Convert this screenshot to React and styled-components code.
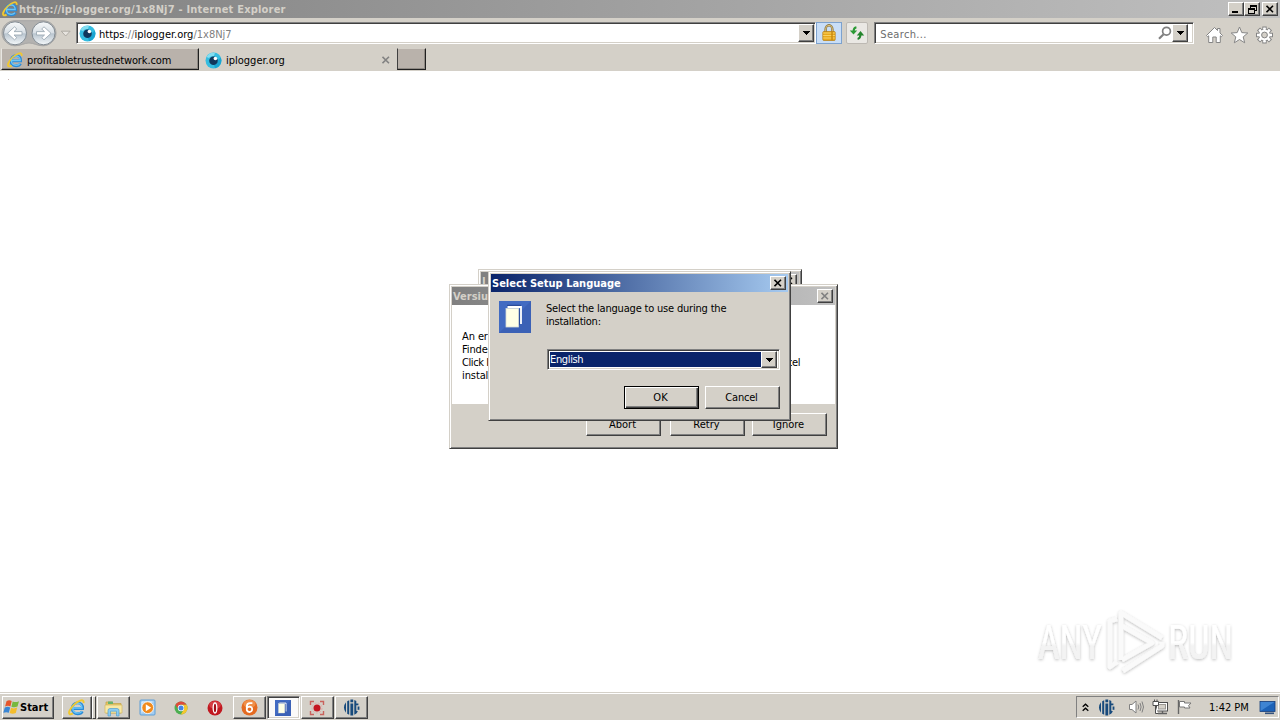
import React, { memo } from 'react';
import styled, { createGlobalStyle, css } from 'styled-components';

const GlobalStyle = createGlobalStyle`
  * { box-sizing: border-box; }
  html, body, #root { height: 100%; }
  body {
    margin: 0;
    overflow: hidden;
    background: #fff;
    color: #000;
    font-family: 'DejaVu Sans Condensed', 'DejaVu Sans', sans-serif;
    font-stretch: condensed;
    font-size: 11px;
    line-height: 13px;
  }
  svg { display: block; flex: none; }
`;

const raised = css`
  border: 1px solid;
  border-color: #fff #404040 #404040 #fff;
  box-shadow: inset -1px -1px 0 #808080;
`;

const sunken = css`
  border: 1px solid;
  border-color: #808080 #fff #fff #808080;
  box-shadow: inset 1px 1px 0 #404040, inset -1px -1px 0 #d4d0c8;
`;

const Desktop = styled.div`
  width: 1280px;
  height: 720px;
  display: flex;
  flex-direction: column;
  background: #fff;
`;

const Text = styled.span`
  white-space: nowrap;
  letter-spacing: ${({ ls }) => ls || 0}px;
  color: ${({ color }) => color || 'inherit'};
  font-weight: ${({ bold }) => (bold ? 700 : 400)};
`;

const BrowserTitle = styled.div`
  height: 18px;
  flex: none;
  display: flex;
  align-items: center;
  padding: 0 2px 0 2px;
  background: linear-gradient(90deg, #808080, #c0c0c0);
`;

const TitleLabel = styled(Text)`
  flex: 1;
  margin-left: ${({ gap }) => gap || 0}px;
`;

const CaptionButton = styled.div`
  width: 16px;
  height: 14px;
  flex: none;
  display: flex;
  align-items: center;
  justify-content: center;
  margin-left: ${({ gap }) => gap || 0}px;
  background: #d4d0c8;
  ${raised}
`;

const NavBar = styled.div`
  height: 30px;
  flex: none;
  display: flex;
  align-items: flex-start;
  padding: 4px 6px 0 0;
  background: #d4d0c8;
`;

const NavArrows = styled.div`
  width: 76px;
  height: 26px;
  margin-top: -2px;
`;

const Field = styled.div`
  width: ${({ w }) => w}px;
  height: 22px;
  display: flex;
  align-items: center;
  padding: 2px 1px 2px 2px;
  background: #fff;
  ${sunken}
`;

const FieldText = styled.div`
  flex: 1;
  padding-left: ${({ pl }) => pl || 0}px;
  padding-top: 2px;
`;

const DropButton = styled.div`
  width: 16px;
  height: ${({ h }) => h || 18}px;
  flex: none;
  display: flex;
  align-items: center;
  justify-content: center;
  margin-right: ${({ mr }) => mr || 0}px;
  background: #d4d0c8;
  ${raised}
`;

const ToolButton = styled.div`
  width: ${({ w }) => w}px;
  height: 22px;
  display: flex;
  align-items: center;
  justify-content: center;
  margin: 0 ${({ mr }) => mr}px 0 ${({ ml }) => ml}px;
  border: 1px solid ${({ active }) => (active ? '#7da2ce' : '#bdb9b3')};
  border-radius: ${({ active }) => (active ? 0 : 2)}px;
  background: ${({ active }) => (active ? '#c9def7' : '#eae8e4')};
`;

const NavIcons = styled.div`
  display: flex;
  gap: 6px;
  margin: 4px 0 0 11px;
`;

const TabBar = styled.div`
  height: 23px;
  flex: none;
  display: flex;
  padding-left: 1px;
  background: #d4d0c8;
`;

const Tab = styled.div`
  width: ${({ w }) => w}px;
  height: 22px;
  display: flex;
  align-items: center;
  gap: 4px;
  padding: 2px 7px 0 ${({ active }) => (active ? 6 : 5)}px;
  ${({ active }) =>
    !active &&
    css`
      background: #b9b2ab;
      border: 1px solid;
      border-color: #d4d0c8 #202020 #202020 #e8e6e2;
      box-shadow: inset -1px -1px 0 #8f8a84;
    `}
`;

const NewTab = styled(Tab)`
  border-left-color: #404040;
`;

const Page = styled.div`
  flex: 1;
  padding: 8px;
`;

const Speck = styled.div`
  width: 1px;
  height: 1px;
  background: #c9b6b6;
`;

const Win = styled.div`
  position: absolute;
  left: ${({ x }) => x}px;
  top: ${({ y }) => y}px;
  width: ${({ w }) => w}px;
  height: ${({ h }) => h}px;
  display: flex;
  flex-direction: column;
  padding: 2px;
  background: #d4d0c8;
  border: 1px solid;
  border-color: #d4d0c8 #404040 #404040 #d4d0c8;
  box-shadow: inset 1px 1px 0 #fff, inset -1px -1px 0 #808080;
`;

const WinTitle = styled.div`
  height: 18px;
  flex: none;
  display: flex;
  align-items: center;
  padding: 0 2px 0 1px;
  color: ${({ active }) => (active ? '#fff' : '#d4d0c8')};
  background: ${({ active }) =>
    active ? 'linear-gradient(90deg, #0a246a, #a6caf0)' : 'linear-gradient(90deg, #808080, #c0c0c0)'};
`;

const ErrorBody = styled.div`
  height: 99px;
  flex: none;
  display: flex;
  flex-direction: column;
  padding: 25px 10px 0 10px;
  background: #fff;
`;

const ErrorLine = styled.div`
  display: flex;
  justify-content: space-between;
  height: 13px;
  padding-right: 25px;
  letter-spacing: ${({ ls }) => ls || -0.1}px;
`;

const ErrorActions = styled.div`
  display: flex;
  justify-content: flex-end;
  padding: 9px 8px 0 0;
`;

const Button = styled.div`
  width: 75px;
  height: 23px;
  display: flex;
  align-items: center;
  justify-content: center;
  margin-left: ${({ gap }) => gap || 0}px;
  padding-right: 2px;
  background: #d4d0c8;
  ${raised}
  ${({ primary }) =>
    primary &&
    css`
      border-color: #000;
      box-shadow: inset 1px 1px 0 #fff, inset -1px -1px 0 #404040, inset -2px -2px 0 #808080;
    `}
`;

const SetupBody = styled.div`
  display: flex;
  padding: 9px 9px 0 8px;
`;

const SetupMain = styled.div`
  flex: 1;
  display: flex;
  flex-direction: column;
  padding-left: 15px;
`;

const SetupText = styled.div`
  display: flex;
  flex-direction: column;
  height: 48px;
  padding-top: 1px;
`;

const Select = styled.div`
  height: 21px;
  display: flex;
  align-items: center;
  margin: 0 -1px 0 1px;
  padding: 1px 2px 1px 1px;
  background: #fff;
  ${sunken}
`;

const SelectValue = styled.div`
  flex: 1;
  height: 15px;
  margin-left: 1px;
  padding-top: 1px;
  color: #fff;
  background: #0a246a;
`;

const SetupActions = styled.div`
  display: flex;
  justify-content: flex-end;
  margin: 16px -1px 0 0;
`;

const Watermark = styled.div`
  position: absolute;
  left: 1030px;
  top: 604px;
`;

const Taskbar = styled.div`
  height: 28px;
  flex: none;
  display: flex;
  align-items: flex-start;
  padding: 3px 1px 0 2px;
  background: #d4d0c8;
  border-top: 1px solid #d4d0c8;
  box-shadow: inset 0 1px 0 #fff;
`;

const StartButton = styled.div`
  width: 52px;
  height: 23px;
  display: flex;
  align-items: center;
  margin-right: 8px;
  ${raised}
`;

const TaskItem = styled.div`
  width: ${({ w }) => w || 33}px;
  height: 23px;
  display: flex;
  align-items: center;
  justify-content: center;
  padding-right: 1px;
  margin-right: ${({ mr }) => mr ?? 1}px;
  ${({ open }) => open && raised}
  ${({ pressed }) =>
    pressed &&
    css`
      ${sunken}
      background: #fbfaf9;
    `}
`;

const StackEdge = styled.div`
  width: 4px;
  height: 23px;
  margin-right: ${({ mr }) => mr || 0}px;
  border: 1px solid;
  border-color: #fff #404040 #404040 #fff;
`;

const Tray = styled.div`
  width: 203px;
  height: 22px;
  display: flex;
  align-items: center;
  margin-left: auto;
  padding-left: 5px;
  border: 1px solid;
  border-color: #808080 #fff #fff #808080;
`;

const TrayIcons = styled.div`
  display: flex;
  align-items: center;
  gap: 7px;
  margin-left: ${({ ml }) => ml}px;
`;

const Clock = styled(Text)`
  margin: 0 10px 0 16px;
`;

const IeIcon = ({ size = 16 }) => (
  <svg width={size} height={size} viewBox="0 0 16 16" fill="none">
    <path d="M4 8.9H13.7C14 5.3 11.9 3.6 9.2 3.6C6.2 3.6 4 5.8 4 8.9C4 11.9 6.1 13.9 9.2 13.9C11.3 13.9 12.8 13 13.5 11.6" stroke="#2a8ad6" strokeWidth="2.7" />
    <path d="M4.3 8.5H13.2C13.2 5.4 11.4 4 9.2 4C6.4 4 4.5 6 4.5 8.8C4.5 11.5 6.4 13.3 9.2 13.3C11 13.3 12.3 12.6 13 11.6" stroke="#6cc6f7" strokeWidth="1.3" />
    <path d="M14.6 3.9C15.1 1.7 13.9.7 11.6 1.5C7.6 2.8 3.2 7.1 1.4 11.2C.3 13.9 1.5 15.3 4.6 13.6" stroke="#f0c830" strokeWidth="1.8" />
  </svg>
);

const LoggerIcon = () => (
  <svg width="17" height="17" viewBox="0 0 17 17">
    <circle cx="8.5" cy="8.5" r="8" fill="#35bde0" />
    <path d="M1.5 5A8 8 0 0 1 10 .8L9 4A5 5 0 0 0 4 6Z" fill="#83ddf0" />
    <path d="M15.8 5.5A8 8 0 0 1 10 16.3L9 13A5 5 0 0 0 13 8Z" fill="#1aa5d2" />
    <circle cx="8.5" cy="8.7" r="4.3" fill="#10375c" />
    <circle cx="10.4" cy="6.5" r="1.8" fill="#fff" />
  </svg>
);

const NavArrowsIcon = () => (
  <svg width="76" height="27" viewBox="0 0 76 27">
    <defs>
      <linearGradient id="glass" x1="0" y1="0" x2="0" y2="1">
        <stop offset="0" stopColor="#f7f9fa" />
        <stop offset=".48" stopColor="#d8dfe5" />
        <stop offset=".52" stopColor="#b9c5cf" />
        <stop offset="1" stopColor="#f4f8fa" />
      </linearGradient>
    </defs>
    <path d="M15 .7H43C50 .7 56 6 56 13S50 25.8 43 25.8C37 25.8 34 23 29 23S21 25.8 15 25.8C8 25.8 2 20 2 13S8 .7 15 .7Z" fill="#b3b2b0" stroke="#a6a6a5" />
    {[15, 43.5].map((cx) => (
      <circle key={cx} cx={cx} cy="13.3" r="11.5" fill="url(#glass)" stroke="#828b93" />
    ))}
    <path d="M7.5 13.3L14.5 6.8L16.8 9L14 11.6H22V15H14L16.8 17.7L14.5 19.8Z" fill="#fff" stroke="#9eabb6" strokeWidth=".9" />
    <path d="M51 13.3L44 6.8L41.7 9L44.5 11.6H36.5V15H44.5L41.7 17.7L44 19.8Z" fill="#fff" stroke="#9eabb6" strokeWidth=".9" />
    <path d="M61.3 11.2H70.1L65.7 16Z" fill="#e7e4df" stroke="#aaa69f" strokeWidth=".9" />
  </svg>
);

const DownArrow = () => (
  <svg width="7" height="4" viewBox="0 0 7 4" shapeRendering="crispEdges">
    <path d="M0 0H7L3.5 4Z" fill="#000" />
  </svg>
);

const CloseGlyph = ({ color = '#000' }) => (
  <svg width="8" height="8" viewBox="0 0 8 8">
    <path d="M.5 .8L7 7.2M7 .8L.5 7.2" stroke={color} strokeWidth="1.6" />
  </svg>
);

const LockIcon = () => (
  <svg width="16" height="18" viewBox="0 0 16 18">
    <path d="M4.6 9V5.2A3.4 3.9 0 0 1 11.4 5.2V9" fill="none" stroke="#8a7440" strokeWidth="2.4" />
    <path d="M4.6 9V5.2A3.4 3.9 0 0 1 11.4 5.2V9" fill="none" stroke="#d9c07a" strokeWidth="1" />
    <rect x="1.8" y="7.5" width="12.4" height="9" rx="1" fill="#e8a81c" stroke="#b47b12" strokeWidth=".7" />
    <path d="M2.2 9H13.8M2.2 11.5H13.8M2.2 14H13.8" stroke="#f9d264" />
    <path d="M11 8V16.3" stroke="#c88b12" strokeWidth="1.5" />
  </svg>
);

const RefreshIcon = () => (
  <svg width="16" height="16" viewBox="0 0 16 16" fill="none">
    <path d="M7.4 2.2C5.4 2.6 4.6 4 4.6 6.2" stroke="#2b9a34" strokeWidth="2" />
    <path d="M.8 5.4H8.2L4.5 9.6Z" fill="#2b9a34" />
    <path d="M8.6 13.9C10.6 13.5 11.4 12 11.4 9.8" stroke="#23842c" strokeWidth="2" />
    <path d="M7.8 10.4H15.2L11.5 6Z" fill="#23842c" />
  </svg>
);

const SearchIcon = () => (
  <svg width="14" height="14" viewBox="0 0 14 14" fill="none" stroke="#808080">
    <circle cx="8.5" cy="5.2" r="3.9" strokeWidth="1.7" />
    <path d="M5.6 8.3L1 12.8" strokeWidth="2.2" />
  </svg>
);

const HomeIcon = () => (
  <svg width="19" height="18" viewBox="0 0 19 18">
    <path d="M9.5 1.5L12.5 4.5V2.5H15V7L17.5 9.5L16.4 10.7L15.3 9.8V16.5H11.2V11H7.8V16.5H3.7V9.8L2.6 10.7L1.5 9.5Z" fill="#fff" stroke="#858585" />
  </svg>
);

const StarIcon = () => (
  <svg width="19" height="18" viewBox="0 0 19 18">
    <path d="M9.5 1L11.8 6.6L17.8 7L13.2 10.9L14.7 16.8L9.5 13.5L4.3 16.8L5.8 10.9L1.2 7L7.2 6.6Z" fill="#fff" stroke="#858585" />
  </svg>
);

const GearIcon = () => (
  <svg width="19" height="18" viewBox="0 0 19 18">
    <g transform="translate(9.5 9)">
      {[0, 45, 90, 135, 180, 225, 270, 315].map((a) => (
        <rect key={a} x="-1.7" y="-8" width="3.4" height="4" fill="#fff" stroke="#858585" transform={`rotate(${a})`} />
      ))}
      <circle r="5.8" fill="#fff" stroke="#858585" />
      {[0, 45, 90, 135, 180, 225, 270, 315].map((a) => (
        <rect key={a} x="-1.2" y="-7" width="2.4" height="3" fill="#fff" transform={`rotate(${a})`} />
      ))}
      <circle r="2.9" fill="#d4d0c8" stroke="#858585" />
    </g>
  </svg>
);

const SetupIcon = ({ size }) => (
  <svg width={size} height={size} viewBox="0 0 32 32">
    <rect width="32" height="32" fill="#426bc2" />
    <path d="M0 32L32 0V32Z" fill="#3b61b6" />
    <path d="M8 4.5H22" fill="none" stroke="#2b4b98" strokeWidth="1.5" />
    <path d="M8.5 6H22V23" fill="none" stroke="#fff" strokeWidth="1.8" />
    <path d="M20.3 8V24" stroke="#2b4b98" />
    <rect x="7" y="7.5" width="12.5" height="18.5" fill="#ffffe6" stroke="#d7dcd8" strokeWidth=".8" />
  </svg>
);

const StartLogo = () => (
  <svg width="17" height="17" viewBox="0 0 17 17">
    <path d="M3.5 2.2C5.5 1 7 1.1 8.7 2.1L7.4 7.4C5.8 6.5 4.2 6.4 2.1 7.4Z" fill="#e6562b" />
    <path d="M9.7 2.4C11.6 3.3 13.4 3.3 16 2.2L14.5 7.6C12.3 8.6 10.5 8.6 8.4 7.7Z" fill="#78b83e" />
    <path d="M1.8 8.4C4 7.5 5.5 7.5 7.2 8.4L5.8 13.8C4.2 12.9 2.5 12.9 .3 13.8Z" fill="#3a86d4" />
    <path d="M8.1 8.8C10.2 9.7 12 9.6 14.2 8.6L12.8 14C10.6 15 8.8 15 6.7 14.1Z" fill="#f4bd2b" />
  </svg>
);

const FolderIcon = () => (
  <svg width="19" height="18" viewBox="0 0 19 18">
    <path d="M2 3H8L9 4.5H17V14H2Z" fill="#e6c564" stroke="#c3a044" strokeWidth=".7" />
    <path d="M4 2.5H9V5H4Z" fill="#69b36c" />
    <path d="M1 6H18V14H1Z" fill="#f8e8a4" stroke="#d3b761" strokeWidth=".7" />
    <path d="M4 17V11.5Q4 9.5 6 9.5H13Q15 9.5 15 11.5V17H12.5V12.2H6.5V17Z" fill="#8ccdf2" stroke="#519fcf" strokeWidth=".7" />
  </svg>
);

const MediaIcon = () => (
  <svg width="17" height="17" viewBox="0 0 17 17">
    <rect x="1" y="1" width="15" height="15" rx="1" fill="#a5cdf0" stroke="#5f9fd7" />
    <path d="M3 13.5V3H13.5" fill="none" stroke="#e5f3fd" />
    <circle cx="8.7" cy="8.7" r="5.9" fill="#f18a1c" stroke="#fff" strokeWidth=".8" />
    <path d="M6.8 5.2L12.2 8.7L6.8 12.2Z" fill="#fff" />
  </svg>
);

const ChromeIcon = () => (
  <svg width="14" height="14" viewBox="0 0 14 14">
    <circle cx="7" cy="7" r="6.5" fill="#4cae50" />
    <path d="M1.4 3.7A6.5 6.5 0 0 1 12.6 3.8H7A3 3 0 0 0 4.2 8.3Z" fill="#df4a3b" />
    <path d="M12.6 3.8A6.5 6.5 0 0 1 6.8 13.5L9.7 8.5A3 3 0 0 0 7 3.8Z" fill="#f6c62d" />
    <circle cx="7" cy="7" r="3.2" fill="#fff" />
    <circle cx="7" cy="7" r="2.5" fill="#4285e4" />
  </svg>
);

const OperaIcon = () => (
  <svg width="16" height="16" viewBox="0 0 16 16">
    <circle cx="8" cy="8" r="7.5" fill="#c11820" />
    <ellipse cx="8" cy="5" rx="5.8" ry="3.8" fill="#e4575a" opacity=".6" />
    <ellipse cx="8" cy="8" rx="1.8" ry="5" fill="#a20e16" stroke="#fff" strokeWidth="1.3" />
  </svg>
);

const OrangeIcon = () => (
  <svg width="17" height="17" viewBox="0 0 17 17" fill="none">
    <circle cx="8.5" cy="8.5" r="8" fill="#e46a20" />
    <ellipse cx="8.5" cy="5" rx="6" ry="4" fill="#f5a05a" opacity=".7" />
    <path d="M11.4 4.2H9Q5.8 4.2 5.8 7.6V9.8A2.7 2.7 0 1 0 8.5 7.6Q6.8 7.6 6 9" stroke="#fff" strokeWidth="1.8" />
  </svg>
);

const RecordIcon = () => (
  <svg width="16" height="16" viewBox="0 0 16 16" fill="none">
    <path d="M1.5 5V1.5H5M11 1.5H14.5V5M14.5 11V14.5H11M5 14.5H1.5V11" stroke="#c9625c" strokeWidth="1.4" />
    <circle cx="8" cy="8" r="5" stroke="#e3aaa6" strokeDasharray="2 1.4" />
    <circle cx="8" cy="8" r="3.5" fill="#c41520" />
  </svg>
);

const BitIcon = () => (
  <svg width="17" height="17" viewBox="0 0 17 17">
    <path d="M3 3.2V13.8A8 8 0 0 1 3 3.2Z" fill="#174a7c" />
    <path d="M4.2 2.2L6.2 1.2V15.8L4.2 14.8Z" fill="#174a7c" />
    <path d="M7.4 .6H10.2V3.2H7.4ZM7.4 4.6H10.2V16.4H7.4Z" fill="#174a7c" />
    <path d="M11.3 .9L13.3 2V4.6H15.4V6.2H13.3V11.2Q13.3 12.4 15 12.2L13.4 14.6L11.3 15.8Z" fill="#174a7c" />
    <path d="M14.6 7.5H16.4V10.8H14.6Z" fill="#174a7c" />
  </svg>
);

const ChevronsIcon = () => (
  <svg width="7" height="9" viewBox="0 0 7 9" fill="none" stroke="#000" strokeWidth="1.3">
    <path d="M.7 3.8L3.5 1.2L6.3 3.8M.7 7.8L3.5 5.2L6.3 7.8" />
  </svg>
);

const SpeakerIcon = () => (
  <svg width="17" height="16" viewBox="0 0 17 16" fill="none" stroke="#808080">
    <path d="M1.5 5.5H4L8 2V14L4 10.5H1.5Z" fill="#fff" />
    <path d="M10 5.5Q11.5 8 10 10.5M12 4Q14.2 8 12 12M14 2.5Q17 8 14 13.5" />
  </svg>
);

const NetworkIcon = () => (
  <svg width="17" height="16" viewBox="0 0 17 16">
    <rect x="4.5" y="3.5" width="11" height="8.5" fill="#fff" stroke="#4e4e4e" />
    <rect x="6.5" y="5.5" width="7" height="4.5" fill="#d4d0c8" stroke="#9a9792" />
    <path d="M6 14.5H15M10.5 12V14.5" stroke="#606060" strokeWidth="1.4" />
    <path d="M1 2.5H6.5V6.5H1ZM2.5 .5V2.5M5 .5V2.5M3.5 6.5V14.5H6" fill="#fff" stroke="#4e4e4e" />
  </svg>
);

const FlagIcon = () => (
  <svg width="17" height="16" viewBox="0 0 17 16">
    <path d="M2.5 1V15" stroke="#666" strokeWidth="1.4" />
    <path d="M3.5 2.5H8.5V4H15L12.5 6.7L14 9H8.5V8H3.5Z" fill="#fff" stroke="#777" />
  </svg>
);

const MonitorIcon = () => (
  <svg width="17" height="15" viewBox="0 0 17 15">
    <rect x="1" y="1.5" width="15" height="10" fill="#1d62b7" stroke="#173e7a" strokeWidth=".8" />
    <path d="M1.5 11V2H15.5Z" fill="#3f84d2" />
    <path d="M6 13.3H15" stroke="#34527c" strokeWidth="1.6" />
  </svg>
);

const AnyRunMark = () => (
  <svg width="230" height="76" viewBox="0 0 230 76">
    <defs>
      <linearGradient id="fade" x1="0" y1="0" x2="0" y2="1">
        <stop offset=".5" stopColor="#fff" />
        <stop offset=".56" stopColor="#f3f3f3" />
      </linearGradient>
      <filter id="soft" x="-10%" y="-10%" width="120%" height="130%">
        <feDropShadow dx="0" dy="1" stdDeviation="1.5" floodColor="#000" floodOpacity=".28" />
      </filter>
    </defs>
    <g filter="url(#soft)" fill="url(#fade)" fontFamily="Roboto, sans-serif" fontSize="49" fontWeight="400">
      <text x="8" y="55" textLength="64" lengthAdjust="spacingAndGlyphs">ANY</text>
      <text x="138" y="55" textLength="65" lengthAdjust="spacingAndGlyphs">RUN</text>
      <g fill="none" stroke="#fafafa" strokeWidth="4.5" strokeLinejoin="round">
        <path d="M91 56V9L132 34" />
        <path d="M92 22L122 39L92 56" />
        <path d="M93 67L132 42V38" />
        <path d="M87 15L80 17V63L87 58" />
      </g>
    </g>
  </svg>
);

const Browser = memo(function Browser() {
  return (
    <>
      <BrowserTitle>
        <IeIcon size={16} />
        <TitleLabel bold color="#d4d0c8" ls={0.2} gap={1}>
          https://iplogger.org/1x8Nj7 - Internet Explorer
        </TitleLabel>
        <CaptionButton>
          <svg width="8" height="8" viewBox="0 0 8 8"><path d="M0 6H6V8H0Z" /></svg>
        </CaptionButton>
        <CaptionButton>
          <svg width="9" height="9" viewBox="0 0 9 9" fill="none" stroke="#000" shapeRendering="crispEdges">
            <path d="M2.5 3V.5H8.5V5.5H6.5M2.5 1.5H8.5M.5 3.5H6.5V8.5H.5ZM.5 4.5H6.5" />
          </svg>
        </CaptionButton>
        <CaptionButton gap={2}>
          <CloseGlyph />
        </CaptionButton>
      </BrowserTitle>
      <NavBar>
        <NavArrows>
          <NavArrowsIcon />
        </NavArrows>
        <Field w={741}>
          <LoggerIcon />
          <FieldText pl={3}>
            <Text>
              https<Text color="#808080">://</Text>iplogger.org<Text color="#808080">/1x8Nj7</Text>
            </Text>
          </FieldText>
          <DropButton><DownArrow /></DropButton>
        </Field>
        <ToolButton active w={26} ml={0} mr={4}><LockIcon /></ToolButton>
        <ToolButton w={22} ml={0} mr={6}><RefreshIcon /></ToolButton>
        <Field w={320}>
          <FieldText pl={3}>
            <Text color="#6d6d6d" ls={0.35}>Search...</Text>
          </FieldText>
          <SearchIcon />
          <DropButton mr={4}><DownArrow /></DropButton>
        </Field>
        <NavIcons>
          <HomeIcon />
          <StarIcon />
          <GearIcon />
        </NavIcons>
      </NavBar>
      <TabBar>
        <Tab w={198}>
          <IeIcon />
          <Text ls={-0.12}>profitabletrustednetwork.com</Text>
        </Tab>
        <Tab w={198} active>
          <LoggerIcon />
          <TitleLabel>iplogger.org</TitleLabel>
          <CloseGlyph color="#828282" />
        </Tab>
        <NewTab w={29} />
      </TabBar>
      <Page>
        <Speck />
      </Page>
    </>
  );
});

const Dialogs = () => (
  <>
    <Win x={478} y={269} w={324} h={120}>
      <WinTitle>
        <TitleLabel bold>I</TitleLabel>
        <CaptionButton><CloseGlyph /></CaptionButton>
      </WinTitle>
    </Win>
    <Win x={449} y={284} w={389} h={165}>
      <WinTitle>
        <TitleLabel bold>Versium</TitleLabel>
        <CaptionButton><CloseGlyph color="#808080" /></CaptionButton>
      </WinTitle>
      <ErrorBody>
        <ErrorLine>An er</ErrorLine>
        <ErrorLine>Finde</ErrorLine>
        <ErrorLine ls={-0.4}>
          <span>Click I</span>
          <span>cel</span>
        </ErrorLine>
        <ErrorLine>instal</ErrorLine>
      </ErrorBody>
      <ErrorActions>
        <Button>Abort</Button>
        <Button gap={9}>Retry</Button>
        <Button gap={7}>Ignore</Button>
      </ErrorActions>
    </Win>
    <Win x={488} y={271} w={303} h={150}>
      <WinTitle active>
        <TitleLabel bold>Select Setup Language</TitleLabel>
        <CaptionButton><CloseGlyph /></CaptionButton>
      </WinTitle>
      <SetupBody>
        <SetupIcon size={32} />
        <SetupMain>
          <SetupText>
            <Text ls={-0.19}>Select the language to use during the</Text>
            <Text ls={-0.25}>installation:</Text>
          </SetupText>
          <Select>
            <SelectValue><Text ls={-0.35}>English</Text></SelectValue>
            <DropButton h={17}><DownArrow /></DropButton>
          </Select>
          <SetupActions>
            <Button primary>OK</Button>
            <Button gap={6}><Text ls={-0.2}>Cancel</Text></Button>
          </SetupActions>
        </SetupMain>
      </SetupBody>
    </Win>
  </>
);

const TaskRow = () => (
  <Taskbar>
    <StartButton>
      <StartLogo />
      <Text bold>Start</Text>
    </StartButton>
    <TaskItem open w={30} mr={0}><IeIcon size={17} /></TaskItem>
    <StackEdge mr={1} />
    <TaskItem open><FolderIcon /></TaskItem>
    <TaskItem><MediaIcon /></TaskItem>
    <TaskItem><ChromeIcon /></TaskItem>
    <TaskItem><OperaIcon /></TaskItem>
    <TaskItem open><OrangeIcon /></TaskItem>
    <TaskItem pressed><SetupIcon size={16} /></TaskItem>
    <TaskItem open><RecordIcon /></TaskItem>
    <TaskItem open><BitIcon /></TaskItem>
    <Tray>
      <ChevronsIcon />
      <TrayIcons ml={9}>
        <BitIcon />
      </TrayIcons>
      <TrayIcons ml={13}>
        <SpeakerIcon />
        <NetworkIcon />
        <FlagIcon />
      </TrayIcons>
      <Clock>1:42 PM</Clock>
      <MonitorIcon />
    </Tray>
  </Taskbar>
);

export default function App() {
  return (
    <Desktop>
      <GlobalStyle />
      <Browser />
      <Watermark>
        <AnyRunMark />
      </Watermark>
      <Dialogs />
      <TaskRow />
    </Desktop>
  );
}
